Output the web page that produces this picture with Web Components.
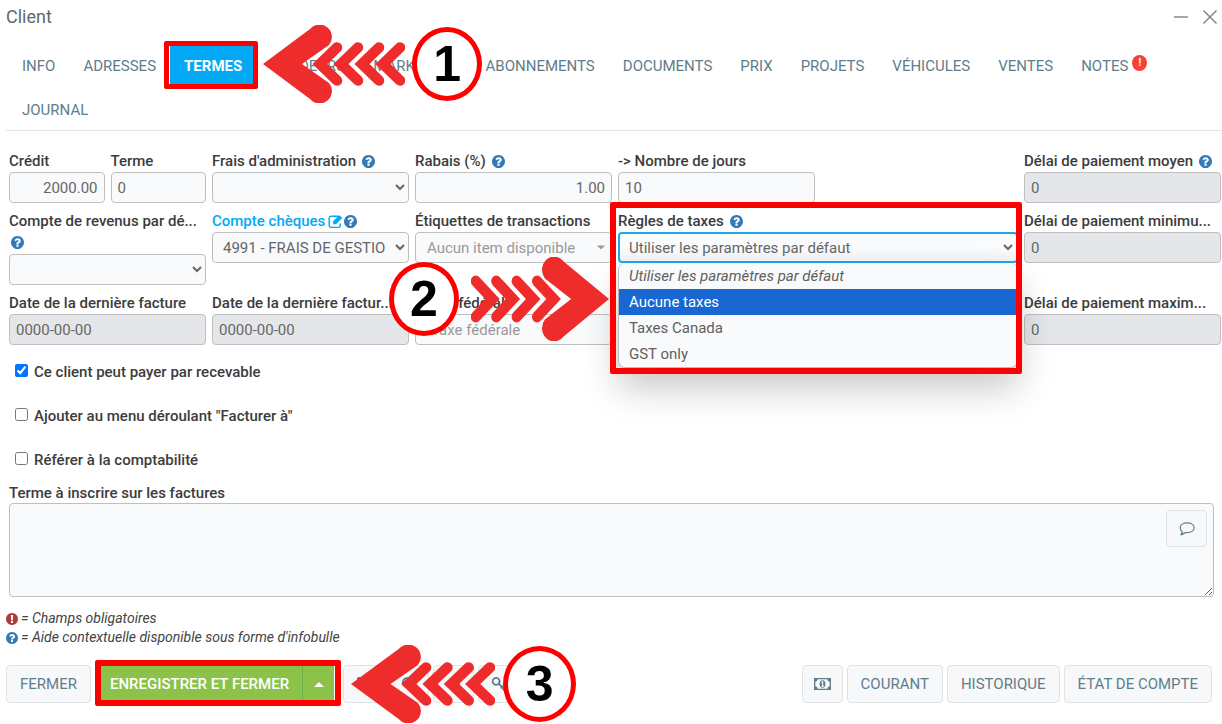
<!DOCTYPE html>
<html lang="fr">
<head>
<meta charset="utf-8">
<meta name="viewport" content="width=device-width, initial-scale=1">
<title>Client</title>
<style>
  html { background: #fff; }
  body { margin: 0; font-family: Roboto, "Liberation Sans", sans-serif; font-size: 15px; color: #3c3c3c; }
</style>
</head>
<body>
<client-window></client-window>

<script>
const ICONS = {
  help: ['0 128 1536 1536', '<path fill="currentColor" d="M896 1376v-192q0-14-9-23t-23-9h-192q-14 0-23 9t-9 23v192q0 14 9 23t23 9h192q14 0 23-9t9-23zm256-672q0-88-55.5-163t-138.5-116-170-41q-243 0-371 213-15 24 8 42l132 100q7 6 19 6 16 0 25-12 53-68 86-92 34-24 86-24 48 0 85.5 26t37.5 59q0 38-20 61t-68 45q-63 28-115.5 86.5t-52.5 125.5v36q0 14 9 23t23 9h192q14 0 23-9t9-23q0-19 21.5-49.5t54.5-49.5q32-18 49-28.5t46-35 44.5-48 28-60.5 12.5-81zm384 192q0 209-103 385.5t-279.5 279.5-385.5 103-385.5-103-279.5-279.5-103-385.5 103-385.5 279.5-279.5 385.5-103 385.5 103 279.5 279.5 103 385.5z"/>'],
  alert: ['0 128 1536 1536', '<path fill="currentColor" d="M768 128q209 0 385.5 103t279.5 279.5 103 385.5-103 385.5-279.5 279.5-385.5 103-385.5-103-279.5-279.5-103-385.5 103-385.5 279.5-279.5 385.5-103zm128 1247v-190q0-14-9-23.5t-22-9.5h-192q-13 0-23 10t-10 23v190q0 13 10 23t23 10h192q13 0 22-9.5t9-23.5zm-2-344l18-621q0-12-10-18-10-8-24-8h-220q-14 0-24 8-10 6-10 18l17 621q0 10 10 17.5t24 7.5h185q14 0 23.5-7.5t10.5-17.5z"/>'],
  edit: ['0 0 14 14', '<path fill="none" stroke="currentColor" stroke-width="1.3" d="M9.500 2.100H3A1.900 1.900 0 0 0 1.100 4v6.600A1.900 1.900 0 0 0 3 12.500h6.600a1.900 1.900 0 0 0 1.900-1.900V8.900"/><path fill="currentColor" d="M4.800 6.800 10.600 1l2.700 2.700-5.800 5.800H4.800z"/>'],
  comment: ['0 0 16 16', '<path fill="none" stroke="currentColor" stroke-width="1.2" stroke-linejoin="round" d="M8.200 1.900c4 0 6.900 2 6.900 4.900s-2.900 4.900-6.900 4.900q-1 0-2-.2-1.700 1.700-4.300 2.300 1.200-1.200 1.300-3.200C1.800 9.600 1.200 8.200 1.200 6.800c0-2.900 3-4.900 7-4.900z"/>'],
  money: ['0 0 17 12', '<path fill="currentColor" fill-rule="evenodd" d="M0 0h17v12H0zM3.700 1.300A2.500 2.500 0 0 1 1.300 3.700v4.600a2.500 2.500 0 0 1 2.400 2.400h9.600a2.500 2.500 0 0 1 2.400-2.400V3.700a2.500 2.500 0 0 1-2.400-2.400z"/><ellipse cx="8.500" cy="6" rx="2.900" ry="3.700" fill="currentColor"/><path stroke="#f7f8fa" stroke-width="1.100" fill="none" d="M7.400 4.500 8.600 3.800v4.200M7.200 8.200h2.800"/>'],
  key: ['0 0 18 18', '<path fill="none" stroke="currentColor" stroke-width="2" d="M8.700 8.600a3.900 3.900 0 1 1 .1-5 3.900 3.900 0 0 1-.1 5L15.500 15.500M11 13.800l2.700-2.600M13.500 16l2.600-2.600"/>'],
  search: ['0 0 16 16', '<circle cx="6.500" cy="6.500" r="4.600" fill="none" stroke="currentColor" stroke-width="2"/><path stroke="currentColor" stroke-width="2.400" d="m10 10 5 5"/>'],
  print: ['0 0 16 16', '<path fill="none" stroke="currentColor" stroke-width="1.500" d="M5 6V3.500h7V6M4 11H3V6.500h10V11h-1M5 9.500h6v4H5z"/>'],
  tag: ['0 0 16 16', '<path fill="currentColor" d="M1 2v5l8 8 6-6-8-8H2z"/>'],
  minus: ['0 0 16 16', '<path stroke="currentColor" stroke-width="1.500" d="M1 8h14"/>'],
  close: ['0 0 16 16', '<path stroke="currentColor" stroke-width="1.500" d="m1.500 1.500 13 13m0-13-13 13"/>'],
  caret: ['0 0 8 5', '<path fill="currentColor" d="M0 .5h8L4 4.500z"/>'],
  up: ['0 0 10 5', '<path fill="currentColor" d="M0 5h10L5 0z"/>']
};

class BaseElement extends HTMLElement {
  connectedCallback() {
    if (this.shadowRoot) return;
    this.attachShadow({ mode: 'open' }).innerHTML =
      '<style>:host{display:block}*{box-sizing:border-box}' + this.css() + '</style>' + this.html();
  }
  css() { return ''; }
  html() { return '<slot></slot>'; }
  attr(n, d = '') { return (this.getAttribute(n) ?? d).replace(/"/g, '&quot;'); }
}

class UiIcon extends BaseElement {
  css() {
    return `:host{display:inline-block;flex:none;width:var(--icon-w,12px);height:var(--icon-h,var(--icon-w,12px))}
      svg{display:block;width:100%;height:100%}`;
  }
  html() {
    const [box, art] = ICONS[this.getAttribute('name')];
    return `<svg viewBox="${box}" aria-hidden="true">${art}</svg>`;
  }
}

/* Red rectangle laid over the element that it is placed in. */
class HighlightFrame extends BaseElement {
  css() {
    return `:host{position:absolute;inset:var(--frame-inset,-4px);border:var(--frame-width,5px) solid #f00;border-radius:2px;pointer-events:none;z-index:5}`;
  }
  html() { return ''; }
}

/* Arrow with its step number. */
class StepMarker extends BaseElement {
  css() {
    return `:host{position:absolute;display:flex;align-items:center;gap:var(--step-gap,7px);z-index:6;pointer-events:none}
      :host([reverse]){flex-direction:row-reverse}
      :host([reverse]) svg{transform:scaleX(-1)}
      svg{display:block;width:var(--arrow-w,142px);height:var(--arrow-h,78px);flex:none}
      b{display:flex;align-items:center;justify-content:center;flex:none;width:var(--disc-w,70px);height:var(--disc-h,74px);border:5px solid #f00;border-radius:50%;
        background:#fff;color:#000;font:bold 50px/1 "Liberation Sans",Arial,sans-serif}`;
  }
  html() {
    const small = [57, 78, 99, 120].map(x => `<path d="M${x + 17} 22.500 ${x} 39 ${x + 17} 55.500"/>`).join('');
    return `<svg viewBox="0 0 142 78" preserveAspectRatio="none" aria-hidden="true"><path fill="#ee2c2c" d="M0 39 47 4a12.400 12.400 0 0 1 19 16L39 39l27 19a12.400 12.400 0 0 1-19 16z"/>
      <g fill="none" stroke="#ee2c2c" stroke-width="10.500" stroke-linecap="round">${small}</g></svg><b>${this.attr('number')}</b>`;
  }
}

class NavTab extends BaseElement {
  css() {
    return `:host{position:relative}
      a{display:flex;align-items:center;height:44px;padding:0 14px;color:#607d8b;text-decoration:none;font-size:15px;white-space:nowrap}
      :host([active]) a{background:#03a9f4;color:#fff;font-weight:700}
      i{display:flex;align-items:center;justify-content:center;width:15px;height:16px;margin:-6px 0 0 4px;border-radius:50%;background:#f44336;color:#fff;font:bold 10px/1 Roboto,sans-serif}`;
  }
  html() {
    const badge = this.hasAttribute('badge') ? `<i>${this.attr('badge')}</i>` : '';
    return `<a href="#" ${this.hasAttribute('active') ? 'aria-current="page"' : ''}><slot name="text"></slot>${badge}</a><slot></slot>`;
  }
}

class FormField extends BaseElement {
  css() {
    return `:host{position:relative;min-width:0}
      .head{display:flex;flex-wrap:wrap;align-items:center;column-gap:6px;height:21px;color:#3c3c3c;white-space:nowrap}
      :host([stacked]) .head{height:43px;align-content:flex-start}
      :host([stacked]) label{flex:0 0 100%}
      .head>*{line-height:21px}
      label,a{font-size:15px;font-weight:500}
      a{color:#03a9f4;text-decoration:none;display:flex;align-items:center;gap:3px;--icon-w:15px}
      :host([link]) .head{column-gap:1px}
      ui-icon[name=help]{color:#337ab7;--icon-w:13px}
      :host([stacked]) ui-icon{margin:4px 0 0 2px}
      .box{position:relative}
      input,select{display:block;width:100%;height:31px;margin:0;border:1px solid #bfbfbf;border-radius:4px;background-color:#f9fafc;
        color:#666;font:15px/20px Roboto,"Liberation Sans",sans-serif;padding:0 6px;outline:none;opacity:1}
      input:disabled{background:#e5e6ea;-webkit-text-fill-color:#666}
      :host([right]) input{text-align:right}
      :host([open]) select{border:2px solid #1ea7e8;padding:0 5px;background-image:linear-gradient(#fafbfd 50%,#f2f3f5)}
      :host([combo]) input{padding:0 24px 0 11px;background:#f9fafc;color:#999}
      :host([combo=plain]) input{padding:0 15px}
      .box ui-icon{position:absolute;right:7px;top:13px;color:#999;--icon-w:8px;--icon-h:5px}
      ::placeholder{color:#999;opacity:1}`;
  }
  html() {
    const has = n => this.hasAttribute(n);
    const text = this.attr('label');
    const label = has('link')
      ? `<label for="c"><a href="#">${text} <ui-icon name="edit"></ui-icon></a></label>`
      : `<label for="c">${text}</label>`;
    const help = has('help') ? '<ui-icon name="help"></ui-icon>' : '';
    const control = has('select')
      ? `<select id="c"><option>${this.attr('value')}</option></select>`
      : has('combo')
        ? `<input id="c" placeholder="${this.attr('value')}">${this.attr('combo') === 'plain' ? '' : '<ui-icon name="caret"></ui-icon>'}`
        : `<input id="c" value="${this.attr('value')}" ${has('disabled') ? 'disabled' : ''}>`;
    return `<div class="head">${label}${help}</div><div class="box">${control}</div><slot></slot>`;
  }
}

class OptionList extends BaseElement {
  css() {
    return `:host{position:absolute;top:100%;left:0;right:0;z-index:4}
      ul{margin:0;padding:0;list-style:none;background:#f9fafc;border:1px solid #bbb;border-top:0;border-radius:7px;box-shadow:0 20px 36px rgba(0,0,0,.22);overflow:hidden}
      li{height:26px;line-height:26px;padding:0 10px;color:#606060;font-size:15px}
      li:first-child{font-style:italic}
      li[aria-selected=true]{background:#1967d2;color:#fff}`;
  }
  html() {
    return `<ul role="listbox">${this.attr('options').split('|').map((o, i) =>
      `<li role="option" aria-selected="${i == this.getAttribute('selected')}">${o}</li>`).join('')}</ul>`;
  }
}

class CheckField extends BaseElement {
  css() {
    return `:host{height:44px}
      label{display:inline-flex;align-items:center;gap:6px;font-size:15px;font-weight:500;line-height:20px;color:#3c3c3c}
      input{width:13px;height:13px;margin:0 0 4px}`;
  }
  html() { return `<label><input type="checkbox" ${this.hasAttribute('checked') ? 'checked' : ''}><slot></slot></label>`; }
}

class ActionButton extends BaseElement {
  css() {
    return `:host{position:relative}
      button{display:flex;align-items:center;justify-content:center;height:38px;min-width:41px;margin:0;padding:0 13px;border:1px solid #dfe3e6;border-radius:4px;
        background:#f7f8fa;color:#607d8b;font:15px/20px Roboto,"Liberation Sans",sans-serif;white-space:nowrap;--icon-w:16px}
      :host([icon]) button{padding:0}
      :host([compact]) button{height:37px}
      :host([money]) button{--icon-w:17px;--icon-h:12px}
      :host([primary]) button{border:0;border-radius:0;background:#8bc34a;color:#fff;font-weight:500;padding:0 13px 0 9px;--icon-w:10px;--icon-h:5px}
      :host([split]) button{border-left:1px solid #6bb04a;min-width:32px;padding:0}`;
  }
  html() {
    const icon = this.hasAttribute('icon') ? `<ui-icon name="${this.attr('icon')}"></ui-icon>` : '';
    return `<button type="button" aria-label="${this.attr('label')}">${icon}<slot></slot></button>`.replace('aria-label=""', '');
  }
}

class NoteBox extends BaseElement {
  css() {
    return `label{display:block;font-size:15px;font-weight:500;line-height:20px;color:#3c3c3c}
      .box{position:relative}
      textarea{display:block;width:100%;height:94px;margin:0;border:1px solid #bfbfbf;border-radius:4px;background:#f9fafc;resize:vertical;font:15px/20px Roboto,sans-serif}
      action-button{position:absolute;top:7px;right:7px}`;
  }
  html() {
    return `<label for="t">${this.attr('label')}</label><div class="box"><textarea id="t"></textarea>
      <action-button compact icon="comment" label="Commentaire"></action-button></div>`;
  }
}

class ClientWindow extends BaseElement {
  css() {
    return `header{display:flex;align-items:center;justify-content:space-between;height:34px;padding:0 4px 0 6px}
      h1{margin:0;font-size:18px;font-weight:400;line-height:24px;color:#666}
      .tools{display:flex;gap:13px;color:#888;--icon-w:16px}
      .tools button{border:0;padding:0;background:none;color:inherit;display:flex}
      nav{display:flex;flex-wrap:wrap;margin:10px 0 0 6px;padding:0 2px;border-bottom:1px solid #dfe3e6;height:87px}
      .grid{display:grid;grid-template-columns:repeat(12,minmax(0,1fr));gap:8px 6px;align-items:start;padding:20px 1px 0 9px}
      .s1{grid-column:span 1}.s2{grid-column:span 2}.s4{grid-column:span 4}.last{grid-column:11 / span 2}
      .tax{z-index:5;--frame-inset:-9px -4px -111px -8px;--frame-width:6px;--arrow-w:138px;--arrow-h:84px;--step-gap:12px}
      .tax step-marker{top:46px;right:calc(100% + 9px)}
      .checks{padding:17px 15px 0}
      note-box{padding:0 8px 0 9px;margin-top:-11px}
      .legend{padding:12px 6px 0;font-size:14px;font-style:italic;line-height:19px;color:#444}
      .legend p{display:flex;align-items:center;gap:3px;margin:0}
      .legend [name=alert]{color:#b03a3a}.legend [name=help]{color:#337ab7}
      footer{display:flex;align-items:center;gap:4px;padding:18px 10px 21px 6px}
      .primary{position:relative;display:flex;margin:0 5px 0 6px;--frame-inset:-5px -7px -3px -6px;--frame-width:6px;
        --arrow-w:144px;--step-gap:8px;--disc-w:73px;--disc-h:76px}
      .primary step-marker{left:calc(100% + 17px);top:-20px}
      .push{margin-left:auto}
      nav highlight-frame{--frame-inset:-3px -2px -1px -6px}
      nav step-marker{left:calc(100% + 7px);top:-19px}`;
  }
  html() {
    const tab = (t, extra = '', inner = '') => `<nav-tab ${extra}><span slot="text">${t}</span>${inner}</nav-tab>`;
    return `
    <header><h1>Client</h1><div class="tools">
      <button type="button" aria-label="Réduire"><ui-icon name="minus"></ui-icon></button>
      <button type="button" aria-label="Fermer"><ui-icon name="close"></ui-icon></button></div></header>
    <nav>
      ${tab('INFO')}${tab('ADRESSES')}
      ${tab('TERMES', 'active', '<highlight-frame></highlight-frame><step-marker number="1"></step-marker>')}
      ${tab('VENDEURS')}${tab('MARKETING')}${tab('ABONNEMENTS')}${tab('DOCUMENTS')}${tab('PRIX')}${tab('PROJETS')}
      ${tab('VÉHICULES')}${tab('VENTES')}${tab('NOTES', 'badge="!"')}${tab('JOURNAL')}
    </nav>
    <main>
      <div class="grid">
        <form-field class="s1" label="Crédit" value="2000.00" right></form-field>
        <form-field class="s1" label="Terme" value="0"></form-field>
        <form-field class="s2" label="Frais d'administration" help select></form-field>
        <form-field class="s2" label="Rabais (%)" help value="1.00" right></form-field>
        <form-field class="s2" label="-> Nombre de jours" value="10"></form-field>
        <form-field class="last" label="Délai de paiement moyen" help value="0" disabled></form-field>

        <form-field class="s2" label="Compte de revenus par dé..." help stacked select></form-field>
        <form-field class="s2" label="Compte chèques" link help select value="4991 - FRAIS DE GESTION"></form-field>
        <form-field class="s2" label="Étiquettes de transactions" combo value="Aucun item disponible"></form-field>
        <form-field class="s4 tax" label="Règles de taxes" help select open value="Utiliser les paramètres par défaut">
          <option-list options="Utiliser les paramètres par défaut|Aucune taxes|Taxes Canada|GST only" selected="1"></option-list>
          <highlight-frame></highlight-frame>
          <step-marker number="2" reverse></step-marker>
        </form-field>
        <form-field class="last" label="Délai de paiement minimu..." value="0" disabled></form-field>

        <form-field class="s2" label="Date de la dernière facture" value="0000-00-00" disabled></form-field>
        <form-field class="s2" label="Date de la dernière factur..." value="0000-00-00" disabled></form-field>
        <form-field class="s2" label="Taxes fédérale" combo="plain" value="Taxe fédérale"></form-field>
        <form-field class="last" label="Délai de paiement maxim..." value="0" disabled></form-field>
      </div>
      <div class="checks">
        <check-field checked>Ce client peut payer par recevable</check-field>
        <check-field>Ajouter au menu déroulant "Facturer à"</check-field>
        <check-field>Référer à la comptabilité</check-field>
      </div>
      <note-box label="Terme à inscrire sur les factures"></note-box>
      <div class="legend">
        <p><ui-icon name="alert"></ui-icon>= Champs obligatoires</p>
        <p><ui-icon name="help"></ui-icon>= Aide contextuelle disponible sous forme d'infobulle</p>
      </div>
    </main>
    <footer>
      <action-button>FERMER</action-button>
      <div class="primary">
        <action-button primary>ENREGISTRER ET FERMER</action-button>
        <action-button primary split icon="up" label="Autres actions"></action-button>
        <highlight-frame></highlight-frame>
        <step-marker number="3"></step-marker>
      </div>
      <action-button icon="tag" label="Étiquette"></action-button>
      <action-button icon="search" label="Rechercher"></action-button>
      <action-button icon="print" label="Imprimer"></action-button>
      <action-button icon="key" label="Accès"></action-button>
      <action-button class="push" money icon="money" label="Paiement"></action-button>
      <action-button>COURANT</action-button>
      <action-button>HISTORIQUE</action-button>
      <action-button>ÉTAT DE COMPTE</action-button>
    </footer>`;
  }
}

customElements.define('ui-icon', UiIcon);
customElements.define('highlight-frame', HighlightFrame);
customElements.define('step-marker', StepMarker);
customElements.define('nav-tab', NavTab);
customElements.define('form-field', FormField);
customElements.define('option-list', OptionList);
customElements.define('check-field', CheckField);
customElements.define('action-button', ActionButton);
customElements.define('note-box', NoteBox);
customElements.define('client-window', ClientWindow);
</script>
</body>
</html>
